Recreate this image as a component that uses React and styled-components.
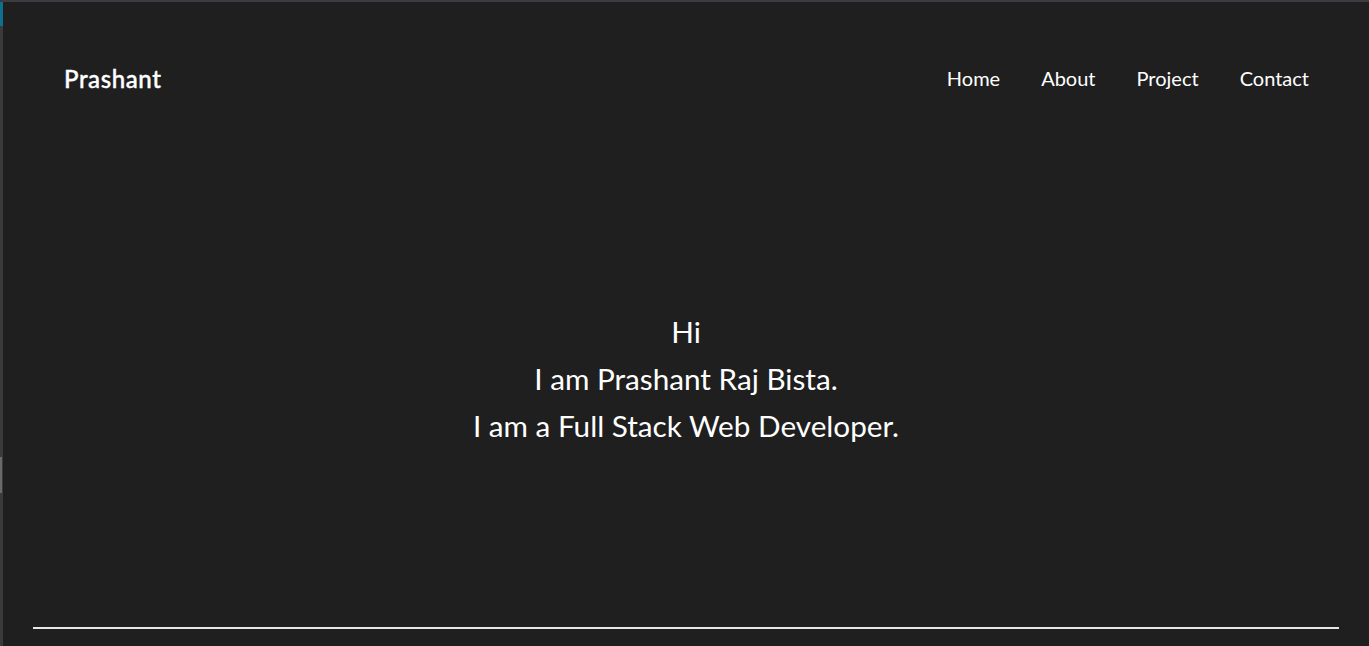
// Imports
import React from 'react';
import styled, {createGlobalStyle} from 'styled-components';





// Styles
const GlobalStyle = createGlobalStyle`
    *{
        box-sizing:border-box;
    }

    html, body{
        margin:0;
        padding:0;
        background-color:#1f1f1f;
    }

    body{
        font-family:Lato, "Open Sans", sans-serif;
        color:#fff;
        overflow:hidden;
    }
`

const Frame = styled.div`
    width:100%;
    height:646px;
    display:flex;
    position:relative;
    flex-direction:column;
    background-color:#1f1f1f;
    border-top:2px solid #3c3c42;
    border-left:3px solid #3a3a3a;
`

const AccentMark = styled.span`
    top:0;
    left:-3px;
    width:3px;
    height:24px;
    position:absolute;
    background-color:#0e6f8e;
`

const ScrollMark = styled.span`
    top:455px;
    left:-3px;
    width:2px;
    height:36px;
    position:absolute;
    background-color:#6a6a6a;
`

const Header = styled.header`
    height:152px;
    display:flex;
    padding:0 60px 0 61px;
    align-items:center;
    justify-content:space-between;
`

const Logo = styled.a`
    color:#fff;
    font-size:24px;
    font-weight:500;
    text-decoration:none;
    letter-spacing:0.6px;
    -webkit-text-stroke:0.4px #fff;
`

const NavList = styled.nav`
    display:flex;
    gap:41px;
    align-items:center;
`

const NavLink = styled.a`
    color:#fff;
    font-size:20px;
    cursor:pointer;
    text-decoration:none;
`

const Hero = styled.section`
    height:448px;
    display:flex;
    align-items:center;
    flex-direction:column;
    justify-content:center;
`

const HeroLine = styled.p`
    margin:0;
    font-size:29.7px;
    line-height:47px;
    text-align:center;
`

const Divider = styled.hr`
    margin:25px 30px 0 30px;
    border:none;
    height:2px;
    background-color:#e6e6e6;
`





export default function App() {

    const links = ['Home', 'About', 'Project', 'Contact'];

    return (
        <>
            <GlobalStyle/>
            <Frame>
                <AccentMark/>
                <ScrollMark/>
                <Header>
                    <Logo href="#">Prashant</Logo>
                    <NavList>
                        {links.map(link => <NavLink key={link}>{link}</NavLink>)}
                    </NavList>
                </Header>
                <Hero>
                    <HeroLine>Hi</HeroLine>
                    <HeroLine>I am Prashant Raj Bista.</HeroLine>
                    <HeroLine>I am a Full Stack Web Developer.</HeroLine>
                </Hero>
                <Divider/>
            </Frame>
        </>
    )
}
